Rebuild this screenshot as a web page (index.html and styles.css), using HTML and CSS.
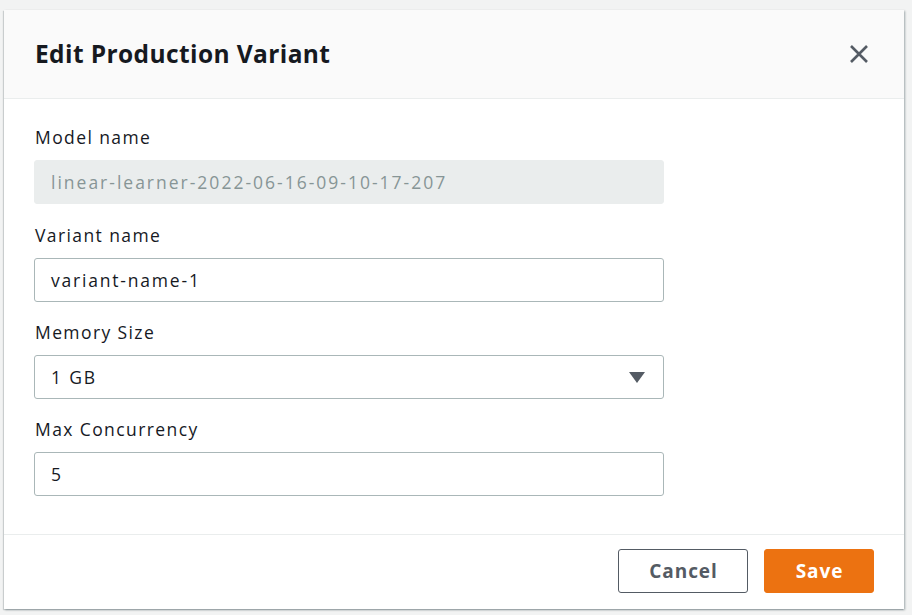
FILE: index.html
```html
<!DOCTYPE html>
<html lang="en">
<head>
<meta charset="utf-8">
<title>Edit Production Variant</title>
<link rel="stylesheet" href="styles.css">
</head>
<body>
<div class="modal">
  <div class="modal-header">
    <h2 class="modal-title">Edit Production Variant</h2>
    <button class="close" aria-label="Close">
      <svg width="20" height="20" viewBox="0 0 20 20"><path d="M2 2 L18 18 M18 2 L2 18" stroke="#545b64" stroke-width="2.6" fill="none"/></svg>
    </button>
  </div>
  <div class="modal-body">
    <div class="field">
      <label class="label">Model name</label>
      <div class="input disabled">linear-learner-2022-06-16-09-10-17-207</div>
    </div>
    <div class="field">
      <label class="label">Variant name</label>
      <div class="input">variant-name-1</div>
    </div>
    <div class="field">
      <label class="label">Memory Size</label>
      <div class="input select">
        <span>1 GB</span>
        <svg width="16" height="11" viewBox="0 0 16 11"><path d="M0 0 H16 L8 11 Z" fill="#545b64"/></svg>
      </div>
    </div>
    <div class="field">
      <label class="label">Max Concurrency</label>
      <div class="input">5</div>
    </div>
  </div>
  <div class="modal-footer">
    <button class="btn btn-normal">Cancel</button>
    <button class="btn btn-primary">Save</button>
  </div>
</div>
</body>
</html>
```
FILE: styles.css
```css
html, body {
  margin: 0;
  padding: 0;
}
body {
  background: #f2f3f3;
  font-family: "Open Sans", "Noto Sans", sans-serif;
  color: #16191f;
  padding: 10px 8px 0 4px;
  height: 615px;
  box-sizing: border-box;
  overflow: hidden;
}
.modal {
  width: 900px;
  background: #fff;
  box-shadow: 1px 1px 2px rgba(0, 28, 36, 0.35), -1px 1px 1px rgba(0, 28, 36, 0.15);
}
.modal-header {
  height: 88px;
  background: #fafafa;
  border-bottom: 1px solid #eaeded;
  display: flex;
  align-items: center;
  justify-content: space-between;
  padding: 0 35px 0 31px;
}
.modal-title {
  margin: 0;
  font-size: 24.5px;
  font-weight: 700;
  line-height: 30px;
  letter-spacing: 0.4px;
  color: #16191f;
}
.close {
  background: none;
  border: 0;
  padding: 0;
  width: 20px;
  height: 20px;
  display: flex;
}
.modal-body {
  padding: 25px 30px 21px 30px;
}
.field {
  margin-bottom: 17px;
}
.field:first-child {
  margin-bottom: 18px;
}
.label {
  display: block;
  font-size: 17.5px;
  line-height: 26px;
  letter-spacing: 1.4px;
  margin-bottom: 10px;
  padding-left: 1px;
}
.input {
  width: 630px;
  height: 44px;
  box-sizing: border-box;
  border: 1px solid #aab7b8;
  border-radius: 3px;
  padding: 0 16px;
  display: flex;
  align-items: center;
  font-size: 17.5px;
  letter-spacing: 1.8px;
  color: #16191f;
}
.input.disabled {
  background: #eaeded;
  border-color: #eaeded;
  color: #879596;
  letter-spacing: 2px;
}
.input.select {
  justify-content: space-between;
  padding-right: 18px;
}
.modal-footer {
  border-top: 1px solid #eaeded;
  height: 75px;
  box-sizing: border-box;
  display: flex;
  justify-content: flex-end;
  align-items: flex-start;
  gap: 16px;
  padding: 14px 30px 0 0;
}
.btn {
  height: 44px;
  border-radius: 3px;
  font-family: "Open Sans", "Noto Sans", sans-serif;
  font-size: 19px;
  font-weight: 700;
  letter-spacing: 0.9px;
  text-indent: 1px;
  cursor: pointer;
}
.btn-normal {
  width: 130px;
  background: #fff;
  border: 1px solid #545b64;
  color: #545b64;
}
.btn-primary {
  width: 110px;
  background: #ec7211;
  border: 1px solid #ec7211;
  color: #fff;
}
```
